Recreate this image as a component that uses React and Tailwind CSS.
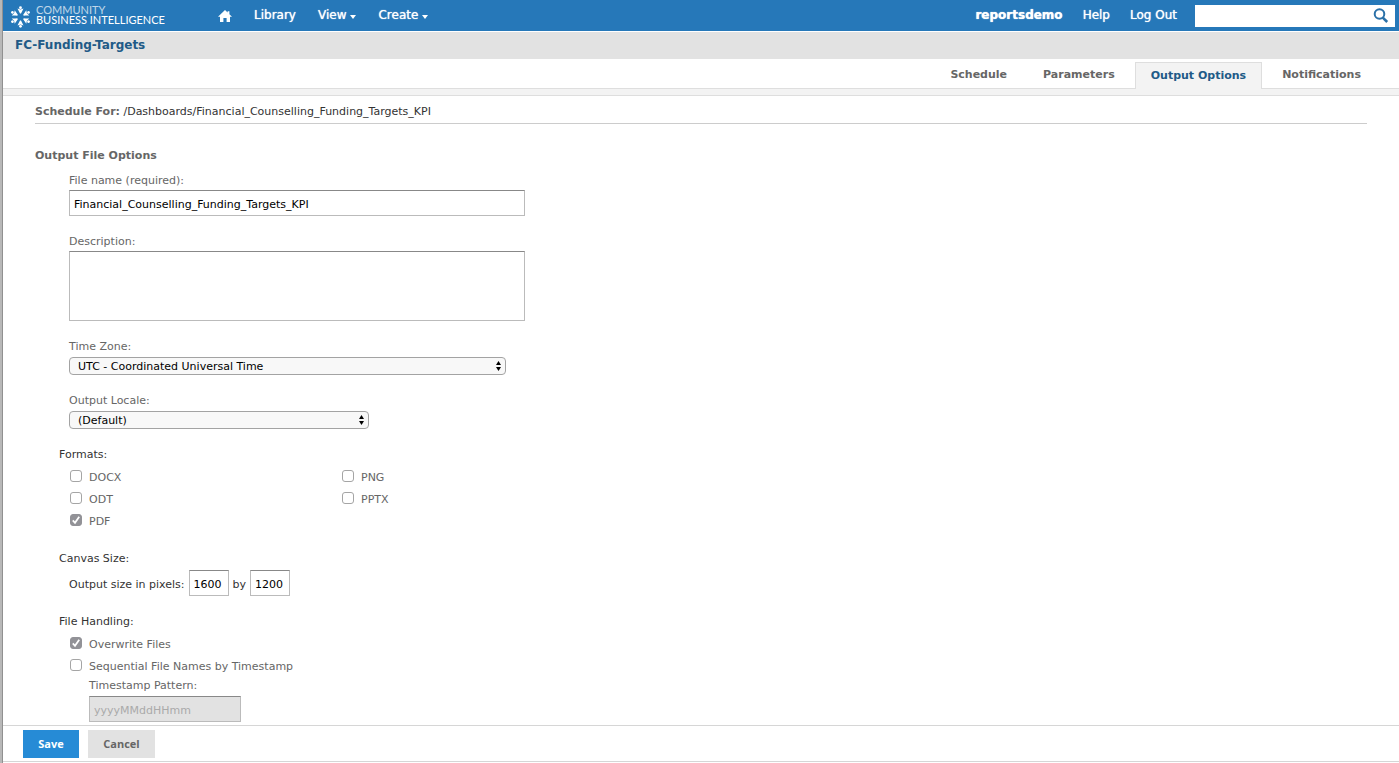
import React, { useState } from "react";

const NAV_ITEMS = [
  { label: "Library", hasMenu: false },
  { label: "View", hasMenu: true },
  { label: "Create", hasMenu: true },
];

const TABS = ["Schedule", "Parameters", "Output Options", "Notifications"];

const FORMATS = ["DOCX", "PNG", "ODT", "PPTX", "PDF"];

const INPUT_CLASS =
  "block h-[26px] border border-[#bbb] border-t-[#888] px-1 pt-[3px] text-[11px] outline-none";

function Logo() {
  return (
    <a href="#" className="flex h-[31px] w-[206px] items-center gap-[5px] pl-[7px] text-white">
      <svg width="21" height="22" viewBox="0 0 21 22" fill="#fff" className="mt-[3px]">
        {[0, 60, 120, 180, 240, 300].map((angle) => (
          <g key={angle} transform={`rotate(${angle} 10.5 11)`}>
            <circle cx="10.5" cy="1.7" r="1.4" />
            <path d="M7.5 2.6 L10.5 3.6 L13.5 2.6 L12 5.6 L11 7.6 H10 L9 5.6 Z" />
          </g>
        ))}
      </svg>
      <span className="flex flex-col pb-px font-['Lato',sans-serif] text-[11px] leading-[10px]">
        <span className="opacity-70">COMMUNITY</span>
        <span>BUSINESS INTELLIGENCE</span>
      </span>
    </a>
  );
}

function Header() {
  return (
    <header className="flex h-[31px] items-center bg-[#2678b9] pr-1 text-[12px] text-white">
      <Logo />
      <nav className="flex items-center gap-[22px] pb-[2px] [text-shadow:0_0_1px_#fff]">
        <a href="#" aria-label="Home" className="mt-[2px] ml-[9px]">
          <svg width="14" height="12" viewBox="0 0 14 12" fill="#fff">
            <path d="M7 0 L9.6 2.5 V1.2 H11.4 V4.2 L14 6.8 H12 V12 H8.6 V8 H5.4 V12 H2 V6.8 H0 Z" />
          </svg>
        </a>
        {NAV_ITEMS.map((item) => (
          <a key={item.label} href="#" className="flex items-center gap-1">
            {item.label}
            {item.hasMenu && (
              <svg width="6" height="4" viewBox="0 0 6 4" fill="#fff" className="mt-[5px]">
                <path d="M0 0 H6 L3 4 Z" />
              </svg>
            )}
          </a>
        ))}
      </nav>
      <div className="ml-auto flex items-center gap-5 pr-[18px] pb-[2px] [text-shadow:0_0_1px_#fff]">
        <span className="font-bold">reportsdemo</span>
        <a href="#">Help</a>
        <a href="#">Log Out</a>
      </div>
      <form className="flex h-[22px] w-[200px] items-center bg-white pr-[6px]">
        <input
          type="text"
          aria-label="Search"
          className="h-full min-w-0 flex-1 px-1 text-[11px] text-black outline-none"
        />
        <button type="button" aria-label="Run search">
          <svg width="16" height="16" viewBox="0 0 16 16" fill="none" stroke="#2a70a8">
            <circle cx="6.5" cy="6" r="4.8" strokeWidth="2" />
            <path d="M9.8 9.6 L14.2 14" strokeWidth="2.6" />
          </svg>
        </button>
      </form>
    </header>
  );
}

function TabBar({ active, onSelect }) {
  return (
    <div className="border-b border-[#dedede] bg-[#f3f3f3] pb-[6px]">
      <div className="flex h-[30px] items-end justify-end border-b border-[#dedede] bg-white pr-5 text-[11px] font-bold">
        {TABS.map((tab) =>
          tab === active ? (
            <button
              key={tab}
              type="button"
              className="mx-[2px] -mb-px h-[27px] border border-b-0 border-[#dedede] bg-[#f3f3f3] px-[15px] text-[#215a87]"
            >
              {tab}
            </button>
          ) : (
            <button
              key={tab}
              type="button"
              onClick={() => onSelect(tab)}
              className="h-[26px] px-[18px] pb-px text-[#666]"
            >
              {tab}
            </button>
          )
        )}
      </div>
    </div>
  );
}

function Checkbox({ label, checked, onChange }) {
  return (
    <label className="flex h-[22px] items-center text-[#666]">
      <span className="relative mr-[7px] block size-3">
        <input
          type="checkbox"
          checked={checked}
          onChange={onChange}
          className="peer block size-3 appearance-none rounded-[3px] border border-[#a5a5a5] bg-white checked:border-[#929297] checked:bg-[#929297]"
        />
        <svg
          viewBox="0 0 12 12"
          fill="none"
          stroke="#fff"
          strokeWidth="1.8"
          className="pointer-events-none absolute inset-0 hidden size-3 peer-checked:block"
        >
          <path d="M2.8 6.4 L5 8.8 L9.2 2.8" />
        </svg>
      </span>
      <span className="pt-[3px]">{label}</span>
    </label>
  );
}

function SelectField({ id, label, width, options }) {
  return (
    <div>
      <label htmlFor={id} className="mb-[2px] block text-[#666]">
        {label}
      </label>
      <div className={`relative ${width}`}>
        <select
          id={id}
          className="block h-[18px] w-full appearance-none rounded-[4px] border border-[#a3a3a3] bg-[#f8f8f8] pt-px pr-5 pl-2 text-[11px] leading-4 text-black outline-none"
        >
          {options.map((option) => (
            <option key={option}>{option}</option>
          ))}
        </select>
        <svg
          width="5"
          height="10"
          viewBox="0 0 5 10"
          className="pointer-events-none absolute top-1 right-[5px]"
        >
          <path d="M2.5 0 L5 4 H0 Z M0 6 H5 L2.5 10 Z" />
        </svg>
      </div>
    </div>
  );
}

export default function App() {
  const [activeTab, setActiveTab] = useState("Output Options");
  const [fileName, setFileName] = useState("Financial_Counselling_Funding_Targets_KPI");
  const [formats, setFormats] = useState(["PDF"]);
  const [size, setSize] = useState({ width: "1600", height: "1200" });
  const [overwrite, setOverwrite] = useState(true);
  const [sequential, setSequential] = useState(false);

  const toggleFormat = (format) => {
    setFormats((prev) =>
      prev.includes(format) ? prev.filter((f) => f !== format) : [...prev, format]
    );
  };

  return (
    <div className="flex min-h-screen bg-white font-['Verdana','DejaVu_Sans',sans-serif] text-[11px] leading-4 text-[#333]">
      <div className="w-[3px] shrink-0 border-r border-[#909090] bg-[#b8b8b8]" />
      <div className="flex min-w-0 flex-1 flex-col">
        <Header />
        <h1 className="mt-px h-[27px] bg-[#e2e2e2] pl-3 text-[12px] leading-[26px] font-bold text-[#215a87]">
          FC-Funding-Targets
        </h1>
        <TabBar active={activeTab} onSelect={setActiveTab} />

        <main className="flex-1 px-8 pt-2 pb-[3px]">
          <p className="border-b border-[#ccc] pb-[3px]">
            <span className="font-bold text-[#666]">Schedule For:</span>{" "}
            /Dashboards/Financial_Counselling_Funding_Targets_KPI
          </p>

          <h2 className="mt-6 font-bold text-[#666]">Output File Options</h2>
          <div className="mt-[9px] flex flex-col gap-[18px] pl-[34px]">
            <div>
              <label htmlFor="fileName" className="mb-px block text-[#666]">
                File name (required):
              </label>
              <input
                id="fileName"
                type="text"
                value={fileName}
                onChange={(e) => setFileName(e.target.value)}
                className={`${INPUT_CLASS} w-[456px] bg-white text-black`}
              />
            </div>
            <div>
              <label htmlFor="description" className="mb-px block text-[#666]">
                Description:
              </label>
              <textarea
                id="description"
                className="block h-[70px] w-[456px] resize-none border border-[#bbb] border-t-[#888] bg-white p-1 text-black outline-none"
              />
            </div>
            <SelectField
              id="timeZone"
              label="Time Zone:"
              width="w-[437px]"
              options={["UTC - Coordinated Universal Time"]}
            />
            <SelectField
              id="outputLocale"
              label="Output Locale:"
              width="w-[300px]"
              options={["(Default)"]}
            />
          </div>

          <fieldset className="mt-[18px] pl-6">
            <legend>Formats:</legend>
            <div className="mt-[2px] grid w-[555px] grid-cols-2 pl-[11px]">
              {FORMATS.map((format) => (
                <Checkbox
                  key={format}
                  label={format}
                  checked={formats.includes(format)}
                  onChange={() => toggleFormat(format)}
                />
              ))}
            </div>
          </fieldset>

          <fieldset className="mt-5 pl-6">
            <legend>Canvas Size:</legend>
            <div className="mt-[3px] flex items-center gap-1 pl-[10px]">
              <label htmlFor="canvasWidth" className="pt-[3px]">
                Output size in pixels:
              </label>
              <input
                id="canvasWidth"
                type="text"
                value={size.width}
                onChange={(e) => setSize({ ...size, width: e.target.value })}
                className={`${INPUT_CLASS} w-10 bg-white text-black`}
              />
              <label htmlFor="canvasHeight" className="pt-[3px]">
                by
              </label>
              <input
                id="canvasHeight"
                type="text"
                value={size.height}
                onChange={(e) => setSize({ ...size, height: e.target.value })}
                className={`${INPUT_CLASS} w-10 bg-white text-black`}
              />
            </div>
          </fieldset>

          <fieldset className="mt-[18px] pl-6">
            <legend>File Handling:</legend>
            <div className="mt-[2px] pl-[11px]">
              <Checkbox
                label="Overwrite Files"
                checked={overwrite}
                onChange={() => setOverwrite(!overwrite)}
              />
              <Checkbox
                label="Sequential File Names by Timestamp"
                checked={sequential}
                onChange={() => setSequential(!sequential)}
              />
              <div className="pt-[2px] pl-[19px]">
                <label htmlFor="pattern" className="mb-[2px] block text-[#666]">
                  Timestamp Pattern:
                </label>
                <input
                  id="pattern"
                  type="text"
                  defaultValue="yyyyMMddHHmm"
                  disabled={!sequential}
                  className={`${INPUT_CLASS} w-[152px] bg-[#e2e2e2] text-[#aaa]`}
                />
              </div>
            </div>
          </fieldset>
        </main>

        <footer className="mb-px flex gap-[9px] border-y border-[#d6d6d6] pt-1 pb-[3px] pl-5 font-['Open_Sans',sans-serif] font-bold">
          <button type="button" className="h-7 w-14 bg-[#268bd6] text-white">
            Save
          </button>
          <button type="button" className="h-7 w-[67px] bg-[#e2e2e2] text-[#666]">
            Cancel
          </button>
        </footer>
      </div>
    </div>
  );
}
